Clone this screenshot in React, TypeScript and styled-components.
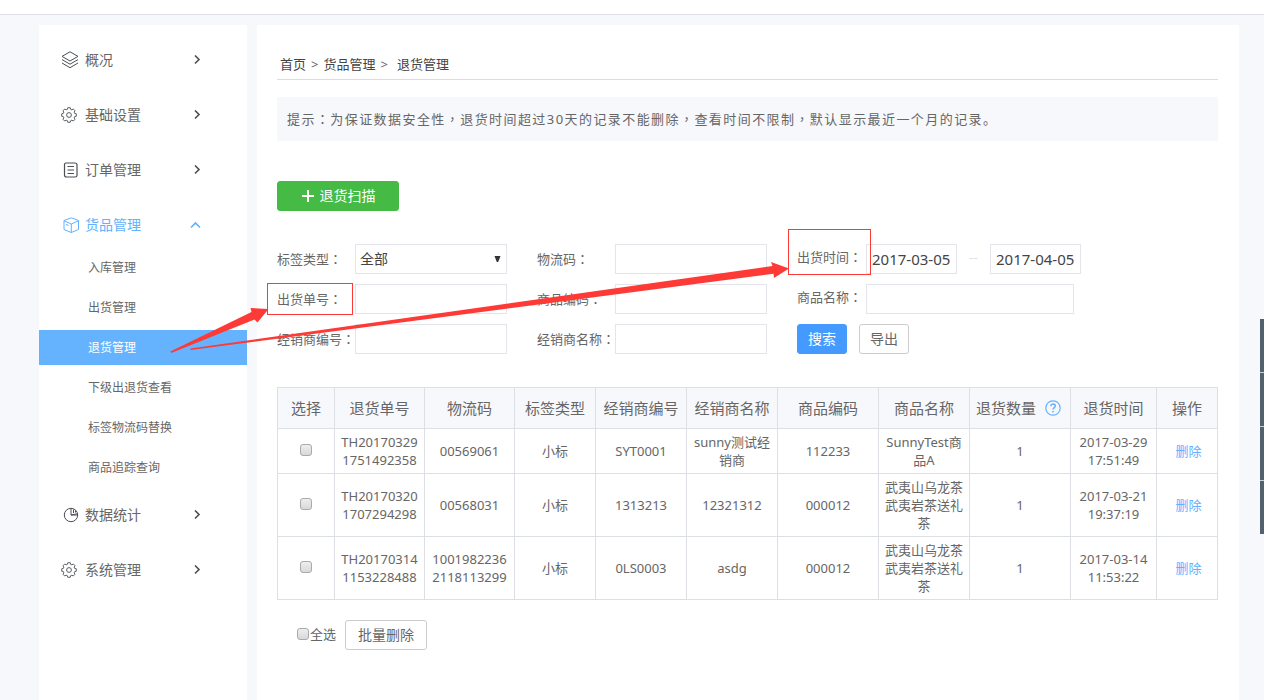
import React from 'react';
import styled, { createGlobalStyle, css } from 'styled-components';

const latin = `"Noto Sans", "Noto Sans CJK SC", sans-serif`;

const GlobalStyle = createGlobalStyle`
  * { box-sizing: border-box; }
  body { margin: 0; background: #f7f8fc; color: #666; font: 13px/18px ${latin}; }
  button, input, select { font: inherit; color: inherit; margin: 0; }
  ul { list-style: none; margin: 0; padding: 0; }
  a { color: inherit; text-decoration: none; }
`;

const Page = styled.div`
  position: relative;
  display: flex;
  flex-direction: column;
  min-height: 100vh;
  overflow: hidden;
`;
const TopBar = styled.header`
  height: 15px;
  background: #fff;
  border-bottom: 1px solid #dde0e6;
`;
const Body = styled.div`
  flex: 1;
  display: flex;
  gap: 10px;
  padding: 10px 25px 0 39px;
`;
const Sidebar = styled.nav`
  flex: none;
  width: 208px;
  padding-top: 17px;
  background: #fff;
`;
const NavGroup = styled.li<{ $open?: boolean }>`
  margin-bottom: ${(p) => (p.$open ? 12 : 20)}px;
`;
const NavLink = styled.a<{ $open?: boolean }>`
  display: flex;
  align-items: center;
  height: 35px;
  padding: 0 45px 0 22px;
  font-size: 14px;
  color: ${(p) => (p.$open ? '#62b1ff' : '#666')};
  svg { flex: none; color: ${(p) => (p.$open ? '#62b1ff' : '#4a4f55')}; }
`;
const NavText = styled.span`
  flex: 1;
  padding-left: 6px;
`;
const SubList = styled.ul`
  display: flex;
  flex-direction: column;
  gap: 5px;
  padding-top: 8px;
`;
const SubLink = styled.a<{ $active?: boolean }>`
  display: block;
  padding-left: 49px;
  font-size: 12px;
  line-height: 35px;
  color: ${(p) => (p.$active ? '#fff' : '#666')};
  background: ${(p) => (p.$active ? '#65b3ff' : 'none')};
`;
const Main = styled.main`
  flex: 1;
  min-width: 0;
  padding: 24px 21px 50px 20px;
  background: #fff;
`;
const Breadcrumb = styled.nav`
  display: flex;
  padding: 0 3px;
  line-height: 30px;
  border-bottom: 1px solid #ddd;
  color: #444;
`;
const Divider = styled.span<{ $wide?: boolean }>`
  padding: 0 ${(p) => (p.$wide ? 9 : 5)}px 0 5px;
  color: #666;
`;
const Notice = styled.p`
  margin: 17px 0 40px;
  padding: 0 10px;
  background: #f7f8fc;
  line-height: 44px;
  letter-spacing: 0.11em;
`;
const Button = styled.button<{ $kind?: 'primary' | 'success' }>`
  display: inline-flex;
  align-items: center;
  justify-content: center;
  gap: 5px;
  height: 30px;
  padding: 0 10px;
  border: 1px solid #ccc;
  border-radius: 3px;
  background: #fff;
  font-size: 14px;
  white-space: nowrap;
  ${(p) => p.$kind === 'primary' && css`border-color: #459aff; background: #459aff; color: #fff;`}
  ${(p) => p.$kind === 'success' && css`
    min-width: 122px;
    border-color: #45bb45;
    background: #45bb45;
    color: #fff;
  `}
`;
const Filters = styled.form`
  display: grid;
  grid-template-columns: 230px 230px auto;
  justify-content: start;
  gap: 10px 30px;
  margin: 33px 0;
`;
const Field = styled.div`
  display: flex;
  align-items: center;
`;
const Label = styled.label<{ $short?: boolean }>`
  flex: none;
  width: ${(p) => (p.$short ? 69 : 78)}px;
  padding-bottom: ${(p) => (p.$short ? 4 : 0)}px;
  white-space: nowrap;
`;
const Punct = styled.span`
  font-family: "Noto Sans CJK TC", sans-serif;
`;
const control = css`
  height: 30px;
  border: 1px solid #e4e5ea;
  border-radius: 0;
  background: #fff;
  color: #444;
`;
const TextBox = styled.input<{ $width?: number }>`
  ${control}
  width: ${(p) => p.$width ?? 152}px;
  padding: 0 5px;
  font-size: 15px;
`;
const SelectWrap = styled.div`
  position: relative;
  svg { position: absolute; right: 6px; top: 12px; pointer-events: none; }
`;
const Select = styled.select`
  ${control}
  display: block;
  width: 152px;
  padding: 0 20px 0 4px;
  appearance: none;
  font-size: 14px;
`;
const RangeDash = styled.span`
  width: 33px;
  padding-bottom: 4px;
  text-align: center;
  color: #ddd;
`;
const Actions = styled.div`
  display: flex;
  gap: 12px;
`;
const Table = styled.table`
  width: 100%;
  table-layout: fixed;
  border-collapse: collapse;
  th, td { border: 1px solid #dcdfe3; text-align: center; overflow-wrap: anywhere; }
  th { height: 41px; padding: 0; background: #f7f8fc; font-size: 15px; font-weight: 400; white-space: nowrap; }
  td { padding: 4px 5px; }
`;
const HelpHead = styled.span`
  display: inline-flex;
  align-items: center;
  gap: 9px;
  padding-right: 3px;
`;
const CheckBox = styled.input`
  appearance: none;
  display: block;
  width: 12px;
  height: 12px;
  border: 1px solid #aaa;
  border-radius: 3px;
  background: linear-gradient(#eee, #d9d9d9);
`;
const CheckCell = styled.td`
  ${CheckBox} { margin: 0 auto 2px; }
`;
const DeleteLink = styled.a`
  padding-left: 3px;
  color: #62b1ff;
`;
const BulkBar = styled.div`
  display: flex;
  align-items: center;
  gap: 9px;
  padding: 20px;
  label { display: flex; align-items: center; gap: 1px; padding-bottom: 2px; }
  ${Button} { padding: 0 12px; }
`;
const SideTools = styled.aside`
  position: absolute;
  top: 319px;
  right: 0;
  width: 4px;
  display: grid;
  gap: 1px;
  background: #c9ced3;
`;
const Tool = styled.span`
  height: 53px;
  background: #52616e;
`;
const Markup = styled.svg`
  position: absolute;
  left: 0;
  top: 0;
  pointer-events: none;
`;

type IconName = 'layers' | 'gear' | 'doc' | 'box' | 'pie';

const gearPath = (() => {
  const pts: string[] = [];
  for (let i = 0; i < 8; i++) {
    const a = (i * Math.PI) / 4;
    [[-0.27, 5.9], [-0.17, 7.4], [0.17, 7.4], [0.27, 5.9]].forEach(([d, r]) => {
      pts.push(`${(8 + r * Math.sin(a + d)).toFixed(2)} ${(8 - r * Math.cos(a + d)).toFixed(2)}`);
    });
  }
  return `M${pts.join('L')}Z`;
})();

const shapes: Record<IconName, React.ReactNode> = {
  layers: (
    <>
      <path d="M9 .8 17 5.4 9 10 1 5.400Z" />
      <path d="M1 8.6 9 13.200l8-4.600M1 12l8 4.700 8-4.700" />
    </>
  ),
  gear: (
    <>
      <path d={gearPath} strokeWidth=".9" />
      <circle cx="8" cy="8" r="2.4" strokeWidth=".9" />
    </>
  ),
  doc: (
    <>
      <path d="M5 2h9q2 0 2 2v10.500q0 1.500-2 1.500H5.500q-2 0-2-2V3.500Q3.500 2 5 2Z" strokeWidth="1.200" />
      <path d="M6.500 5.500h6.500M6.500 9h6.500M6.500 12.500h6.500" />
    </>
  ),
  box: (
    <>
      <path d="M10.300 1.800 17.500 4.500v9l-7.200 3-7.300-3v-9Z" />
      <path d="m3 4.800 7.300 3.200 7.200-3.200M10.300 8v8.500M5 8.300l2.500 1.200" />
    </>
  ),
  pie: (
    <>
      <circle cx="10" cy="9" r="6.700" />
      <path d="M10 2.300V9l6.600-1.300M10 9h6.700M12.500 3.500v3.500M14.500 4.500v2" />
    </>
  ),
};

function Icon({ name }: { name: IconName }) {
  return (
    <svg width="18" height="18" viewBox={name === 'gear' ? '0 -1 18 18' : '0 0 18 18'} fill="none" stroke="currentColor" strokeWidth="1">
      {shapes[name]}
    </svg>
  );
}

function Chevron({ open }: { open?: boolean }) {
  return (
    <svg width="12" height="10" viewBox="0 0 12 10" fill="none" stroke="currentColor" strokeWidth="1.600">
      <path d={open ? 'M1 7.500 5.500 3 10 7.500' : 'M5 .5 9 4.500 5 8.500'} />
    </svg>
  );
}

const menu: { text: string; icon: IconName; items?: string[] }[] = [
  { text: '概况', icon: 'layers' },
  { text: '基础设置', icon: 'gear' },
  { text: '订单管理', icon: 'doc' },
  {
    text: '货品管理',
    icon: 'box',
    items: ['入库管理', '出货管理', '退货管理', '下级出退货查看', '标签物流码替换', '商品追踪查询'],
  },
  { text: '数据统计', icon: 'pie' },
  { text: '系统管理', icon: 'gear' },
];

const columns: [string, number][] = [
  ['选择', 57], ['退货单号', 90], ['物流码', 90], ['标签类型', 81], ['经销商编号', 91], ['经销商名称', 91],
  ['商品编码', 101], ['商品名称', 91], ['退货数量', 101], ['退货时间', 86], ['操作', 61],
];

const rows = [
  ['TH201703291751492358', '00569061', '小标', 'SYT0001', 'sunny测试经销商', '112233', 'SunnyTest商品A', '1', '2017-03-29', '17:51:49'],
  ['TH201703201707294298', '00568031', '小标', '1313213', '12321312', '000012', '武夷山乌龙茶武夷岩茶送礼茶', '1', '2017-03-21', '19:37:19'],
  ['TH201703141153228488', '10019822362118113299', '小标', '0LS0003', 'asdg', '000012', '武夷山乌龙茶武夷岩茶送礼茶', '1', '2017-03-14', '11:53:22'],
];

function FieldLabel({ id, text, short }: { id: string; text: string; short?: boolean }) {
  return (
    <Label htmlFor={id} $short={short}>
      {text}
      <Punct>：</Punct>
    </Label>
  );
}

function TextField({ id, text, short, width }: { id: string; text: string; short?: boolean; width?: number }) {
  return (
    <Field>
      <FieldLabel id={id} text={text} short={short} />
      <TextBox id={id} type="text" $width={width} />
    </Field>
  );
}

export default function App() {
  return (
    <Page>
      <GlobalStyle />
      <TopBar />
      <Body>
        <Sidebar>
          <ul>
            {menu.map((m) => (
              <NavGroup key={m.text} $open={!!m.items}>
                <NavLink href="#" $open={!!m.items}>
                  <Icon name={m.icon} />
                  <NavText>{m.text}</NavText>
                  <Chevron open={!!m.items} />
                </NavLink>
                {m.items && (
                  <SubList>
                    {m.items.map((s) => (
                      <li key={s}>
                        <SubLink href="#" $active={s === '退货管理'}>{s}</SubLink>
                      </li>
                    ))}
                  </SubList>
                )}
              </NavGroup>
            ))}
          </ul>
        </Sidebar>
        <Main>
          <Breadcrumb>
            <a href="#">首页</a>
            <Divider>&gt;</Divider>
            <a href="#">货品管理</a>
            <Divider $wide>&gt;</Divider>
            <a href="#">退货管理</a>
          </Breadcrumb>
          <Notice>
            提示<Punct>：</Punct>为保证数据安全性<Punct>，</Punct>退货时间超过30天的记录不能删除<Punct>，</Punct>查看时间不限制<Punct>，</Punct>默认显示最近一个月的记录。
          </Notice>
          <Button type="button" $kind="success">
            <svg width="14" height="14" viewBox="0 0 14 14" stroke="#fff" strokeWidth="2">
              <path d="M1 7h12M7 1v12" />
            </svg>
            退货扫描
          </Button>
          <Filters>
            <Field>
              <FieldLabel id="tagType" text="标签类型" />
              <SelectWrap>
                <Select id="tagType">
                  <option>全部</option>
                </Select>
                <svg width="7" height="7" viewBox="0 0 7 7">
                  <path d="M.5 0h6L4.200 6H2.800Z" fill="#333" />
                </svg>
              </SelectWrap>
            </Field>
            <TextField id="logistics" text="物流码" />
            <Field>
              <FieldLabel id="dateFrom" text="出货时间" short />
              <TextBox id="dateFrom" type="text" defaultValue="2017-03-05" $width={91} />
              <RangeDash>--</RangeDash>
              <TextBox aria-label="结束时间" type="text" defaultValue="2017-04-05" $width={91} />
            </Field>
            <TextField id="orderNo" text="出货单号" />
            <TextField id="goodsCode" text="商品编码" />
            <TextField id="goodsName" text="商品名称" short width={208} />
            <TextField id="dealerNo" text="经销商编号" />
            <TextField id="dealerName" text="经销商名称" />
            <Actions>
              <Button type="button" $kind="primary">搜索</Button>
              <Button type="button">导出</Button>
            </Actions>
          </Filters>
          <Table>
            <colgroup>
              {columns.map(([name, w]) => (
                <col key={name} width={w} />
              ))}
            </colgroup>
            <thead>
              <tr>
                {columns.map(([name]) => (
                  <th key={name} scope="col">
                    {name === '退货数量' ? (
                      <HelpHead>
                        {name}
                        <svg width="16" height="16" viewBox="0 0 16 16" fill="none" stroke="#62b1ff">
                          <circle cx="8" cy="8" r="7.200" strokeWidth="1.200" />
                          <path d="M5.800 6.200C5.800 3.200 10.300 3.400 10.300 6.100 10.300 7.700 8 7.700 8 9.600" strokeWidth="1.500" />
                          <circle cx="8" cy="11.600" r=".9" fill="#62b1ff" stroke="none" />
                        </svg>
                      </HelpHead>
                    ) : (
                      name
                    )}
                  </th>
                ))}
              </tr>
            </thead>
            <tbody>
              {rows.map((r) => (
                <tr key={r[0]}>
                  <CheckCell>
                    <CheckBox type="checkbox" aria-label={r[0]} />
                  </CheckCell>
                  {r.slice(0, 8).map((c, i) => (
                    <td key={i}>{c}</td>
                  ))}
                  <td>
                    {r[8]}
                    <br />
                    {r[9]}
                  </td>
                  <td>
                    <DeleteLink href="#">删除</DeleteLink>
                  </td>
                </tr>
              ))}
            </tbody>
          </Table>
          <BulkBar>
            <label>
              <CheckBox type="checkbox" />
              全选
            </label>
            <Button type="button">批量删除</Button>
          </BulkBar>
        </Main>
      </Body>
      <SideTools>
        <Tool />
        <Tool />
        <Tool />
        <Tool />
      </SideTools>
      <Markup width="900" height="400" viewBox="0 0 900 400" fill="#fd3a36">
        <path d="M170.300 351.500 251.500 312 250.500 308 268.500 309 257.500 322.500 254.500 319.500 171.200 353Z" />
        <path d="M190.500 348.500 772.500 266 771 262 789 268.500 774 278 773.500 273.700 190.500 350Z" />
        <g fill="none" stroke="#fd3a36">
          <rect x="267.500" y="283.500" width="85" height="31" />
          <rect x="788.500" y="229.500" width="82" height="45" />
        </g>
      </Markup>
    </Page>
  );
}
